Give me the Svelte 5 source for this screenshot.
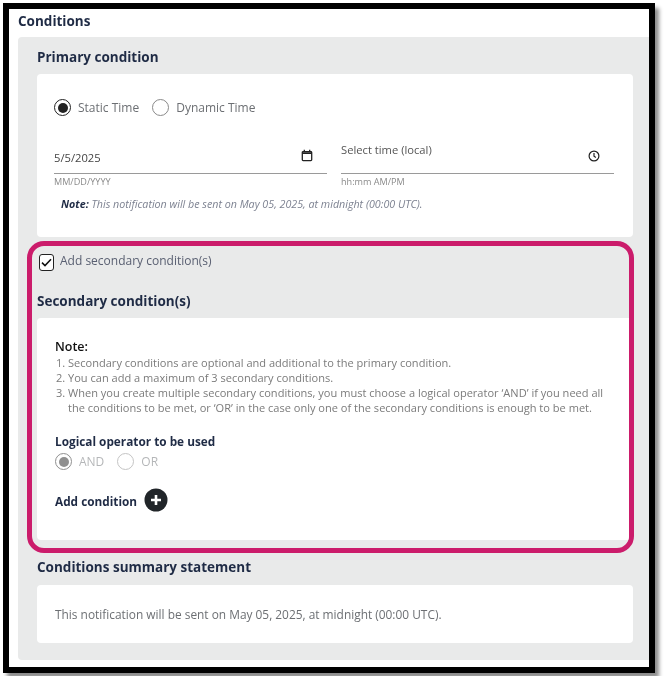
<script>
  const notes = [
    'Secondary conditions are optional and additional to the primary condition.',
    'You can add a maximum of 3 secondary conditions.',
    'When you create multiple secondary conditions, you must choose a logical operator ‘AND’ if you need all the conditions to be met, or ‘OR’ in the case only one of the secondary conditions is enough to be met.'
  ];
</script>

<div class="page">
  <main class="frame">
    <h1>Conditions</h1>
    <section class="panel">
      <h2 class="primary-title">Primary condition</h2>
      <div class="card primary">
        <div class="radios">
          <span class="radio on"></span><span class="rlabel">Static Time</span>
          <span class="radio second"></span><span class="rlabel">Dynamic Time</span>
        </div>
        <div class="fields">
          <div class="field">
            <div class="control">
              <span class="value">5/5/2025</span>
              <svg class="cal" width="12" height="13" viewBox="0 0 12 13" fill="none" stroke="#222" aria-hidden="true">
                <rect x="1.3" y="2.6" width="9.4" height="9" rx="0.8" stroke-width="1.3"/>
                <path d="M1.3 4.2h9.4" stroke-width="1.8"/>
                <path d="M3.3 0.8v2M8.7 0.8v2" stroke-width="1.3"/>
              </svg>
            </div>
            <div class="hint">MM/DD/YYYY</div>
          </div>
          <div class="field">
            <div class="control">
              <span class="value raised">Select time (local)</span>
              <svg class="clock" width="12" height="12" viewBox="0 0 12 12" fill="none" stroke="#222" stroke-width="1.2" aria-hidden="true">
                <circle cx="6" cy="6" r="4.9"/>
                <path d="M6 3v3.2l1.9 1.3"/>
              </svg>
            </div>
            <div class="hint">hh:mm AM/PM</div>
          </div>
        </div>
        <p class="note"><b>Note:</b> This notification will be sent on May 05, 2025, at midnight (00:00 UTC).</p>
      </div>

      <div class="highlight">
        <div class="check-row">
          <span class="checkbox">
            <svg width="11" height="9" viewBox="0 0 11 9" fill="none" stroke="#111" stroke-width="1.5" aria-hidden="true"><path d="M1 4.6l3 3L10 1.2"/></svg>
          </span>
          <span class="check-label">Add secondary condition(s)</span>
        </div>
        <h2 class="secondary-title">Secondary condition(s)</h2>
        <div class="card secondary">
          <div class="note-title">Note:</div>
          <ol>
            {#each notes as n}<li>{n}</li>{/each}
          </ol>
          <div class="op-title">Logical operator to be used</div>
          <div class="radios disabled">
            <span class="radio on"></span><span class="rlabel">AND</span>
            <span class="radio second"></span><span class="rlabel">OR</span>
          </div>
          <div class="add">
            <span>Add condition</span>
            <svg width="24" height="24" viewBox="0 0 24 24" aria-hidden="true">
              <circle cx="12" cy="12" r="11.5" fill="#212529"/>
              <path d="M12 7v10M7 12h10" stroke="#fff" stroke-width="2.6"/>
            </svg>
          </div>
        </div>
      </div>

      <h2 class="summary-title">Conditions summary statement</h2>
      <div class="card summary">This notification will be sent on May 05, 2025, at midnight (00:00 UTC).</div>
    </section>
  </main>
</div>

<style>
  :global(body) { margin: 0; background: #fff; }
  .page {
    padding: 3px;
    width: 652px;
    height: 670px;
    font-family: "Open Sans", "Noto Sans", sans-serif;
    color: #6c6f73;
    font-size: 12px;
    filter: blur(0.4px);
  }
  .frame {
    box-sizing: border-box;
    width: 652px;
    height: 670px;
    border: 6px solid #000;
    background: #fff;
    box-shadow: 4px 5px 4px rgba(0, 0, 0, 0.45);
    overflow: hidden;
  }
  h1, h2, p { margin: 0; }
  h1 {
    font-size: 13.5px;
    font-weight: 700;
    line-height: 24px;
    color: #1f2b45;
    padding-left: 9px;
    height: 28px;
  }
  .panel {
    margin-left: 9px;
    height: 623px;
    background: #e9eaea;
    border-radius: 4px 0 0 4px;
    padding-left: 19px;
    box-sizing: border-box;
    overflow: hidden;
  }
  h2 {
    font-size: 13.5px;
    font-weight: 700;
    color: #1f2b45;
    line-height: 20px;
  }
  .primary-title { padding-top: 10px; height: 27px; }
  .card { background: #fff; border-radius: 4px; box-sizing: border-box; }
  .primary {
    width: 596px;
    height: 163px;
    padding: 25px 0 0 17px;
  }
  .radios { display: flex; align-items: center; height: 17px; }
  .radio {
    box-sizing: border-box;
    width: 17px;
    height: 17px;
    border-radius: 50%;
    border: 1px solid #8a8a8a;
    background: #fff;
    flex: none;
    position: relative;
  }
  .radio.on { border: 1.5px solid #222; }
  .radio.on::after {
    content: "";
    position: absolute;
    inset: 2.5px;
    border-radius: 50%;
    background: #222;
  }
  .rlabel { margin-left: 7px; font-size: 12px; color: #6c6f73; }
  .radio.second { margin-left: 13px; }
  .fields { display: flex; gap: 14px; margin-top: 24px; }
  .field { width: 273px; }
  .control {
    border-bottom: 1px solid #9a9a9a;
    display: flex;
    justify-content: space-between;
    align-items: flex-start;
    height: 33px;
  }
  .value { font-size: 11.2px; line-height: 16px; color: #444; margin-top: 10px; }
  .value.raised { margin-top: 2px; color: #555; }
  .cal { margin: 9px 14px 0 0; }
  .clock { margin: 10px 14px 0 0; }
  .hint { font-size: 9.1px; color: #8a8a8a; line-height: 12px; margin-top: 2px; }
  .note {
    font-size: 10.7px;
    font-style: italic;
    color: #7d8291;
    line-height: 14px;
    margin: 9px 0 0 7px;
  }
  .note b { color: #1f2b45; font-weight: 700; }
  .highlight {
    box-sizing: border-box;
    width: 607px;
    height: 312px;
    margin: 4px 0 0 -10px;
    border: 5px solid #cb1c6b;
    border-radius: 17px;
    padding-left: 5px;
    overflow: hidden;
  }
  .check-row { display: flex; align-items: flex-start; margin-left: 2px; padding-top: 8px; height: 24px; }
  .checkbox {
    box-sizing: border-box;
    width: 15px;
    height: 17px;
    border: 1.5px solid #222;
    border-radius: 3px;
    background: #fff;
    display: flex;
    align-items: center;
    justify-content: center;
    flex: none;
  }
  .check-label { margin-left: 6px; font-size: 12px; line-height: 14px; color: #5a6072; }
  .secondary-title { margin-top: 13px; height: 27px; }
  .secondary {
    width: 592px;
    height: 222px;
    padding: 21px 0 0 18px;
    border-radius: 4px 0 0 4px;
  }
  .note-title { font-size: 12.5px; font-weight: 600; color: #111; line-height: 16px; }
  ol {
    margin: 0;
    padding: 0 0 0 13px;
    font-size: 11.05px;
    line-height: 15px;
    color: #7b7b7b;
    width: 552px;
  }
  .op-title {
    margin-top: 18px;
    font-size: 11.8px;
    font-weight: 700;
    color: #1f2b45;
    line-height: 16px;
  }
  .disabled { margin-top: 4px; opacity: 0.5; }
  .add {
    display: flex;
    align-items: center;
    gap: 7px;
    margin-top: 17px;
    font-size: 11.8px;
    font-weight: 700;
    color: #1f2b45;
    line-height: 24px;
  }
  .add span { padding-top: 2px; }
  .summary-title { margin-top: 4px; height: 28px; }
  .summary {
    width: 596px;
    height: 58px;
    padding: 21px 0 0 18px;
    font-size: 11.9px;
    line-height: 16px;
    color: #6c6f73;
  }
</style>
